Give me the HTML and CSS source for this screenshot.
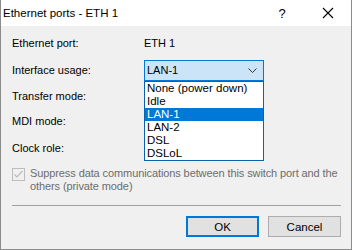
FILE: index.html
```html
<!DOCTYPE html>
<html lang="en">
<head>
    <meta charset="UTF-8">
    <title>Ethernet ports - ETH 1</title>
    <link rel="stylesheet" href="styles.css">
</head>
<body>
    <div class="window">
        <div class="titlebar">
            <span class="title">Ethernet ports - ETH 1</span>
            <span class="help">?</span>
            <span class="close">
                <svg width="12" height="12" viewBox="0 0 12 12"><path d="M1 1 L11 11 M11 1 L1 11" stroke="#000" stroke-width="1.1" fill="none"/></svg>
            </span>
        </div>

        <div class="content">
            <div class="form">
                <div class="row r1">
                    <span class="label">Ethernet port:</span>
                    <span class="value">ETH 1</span>
                </div>
                <div class="row r2">
                    <span class="label">Interface usage:</span>
                    <div class="combo">
                        <div class="combo-box">
                            <span>LAN-1</span>
                            <svg width="9" height="5" viewBox="0 0 9 5"><path d="M0.5 0.5 L4.5 4.5 L8.5 0.5" stroke="#333" stroke-width="1" fill="none"/></svg>
                        </div>
                        <ul class="combo-list">
                            <li>None (power down)</li>
                            <li>Idle</li>
                            <li class="selected">LAN-1</li>
                            <li>LAN-2</li>
                            <li>DSL</li>
                            <li>DSLoL</li>
                        </ul>
                    </div>
                </div>
                <div class="row r3">
                    <span class="label">Transfer mode:</span>
                </div>
                <div class="row r4">
                    <span class="label">MDI mode:</span>
                </div>
                <div class="row r5">
                    <span class="label">Clock role:</span>
                </div>
            </div>

            <label class="check">
                <span class="checkbox">
                    <svg width="11" height="11" viewBox="0 0 11 11"><path d="M1.5 5.5 L4 8 L9.5 2" stroke="#bcbcbc" stroke-width="1.2" fill="none"/></svg>
                </span>
                <span class="check-text">Suppress data communications between this switch port and the others (private mode)</span>
            </label>

            <div class="separator"></div>

            <div class="buttons">
                <button class="btn default">OK</button>
                <button class="btn">Cancel</button>
            </div>
        </div>
    </div>
</body>
</html>
```

FILE: styles.css
```css
body {
    margin: 0;
    font-family: "Liberation Sans", Arial, sans-serif;
    font-size: 11px;
    color: #000000;
    background-color: #ffffff;
}

.window {
    width: 350px;
    height: 249px;
    border: 1px solid #8c8c8c;
    border-top: none;
    display: flex;
    flex-direction: column;
}

/* Заголовок вікна */
.titlebar {
    height: 26px;
    background-color: #ffffff;
    display: flex;
    align-items: center;
    padding-left: 2px;
}

.title {
    flex: 1;
    font-size: 11.5px;
}

.help {
    width: 18px;
    text-align: center;
    font-size: 13px;
    margin-right: 31px;
}

.close {
    width: 12px;
    height: 12px;
    margin-right: 17px;
    display: flex;
}

/* Основна частина */
.content {
    flex: 1;
    background-color: #f0f0f0;
    padding: 4px 10px 0 11px;
    display: flex;
    flex-direction: column;
}

.row {
    display: flex;
    align-items: center;
}

.r1 { height: 26px; }
.r2 { height: 28px; }
.r3 { height: 24px; }
.r4 { height: 26px; }
.r5 { height: 28px; }

.label {
    width: 132px;
}

.combo {
    position: relative;
    width: 120px;
}

.combo-box {
    height: 19px;
    border: 1px solid #0078d7;
    background-color: #cce4f7;
    display: flex;
    align-items: center;
    justify-content: space-between;
    padding: 0 6px 0 2px;
}

.combo-list {
    position: absolute;
    top: 21px;
    left: 0;
    width: 118px;
    margin: 0;
    padding: 0;
    list-style: none;
    background-color: #ffffff;
    border: 1px solid #0a64ad;
    z-index: 10;
}

.combo-list li {
    height: 13px;
    line-height: 13px;
    padding-left: 2px;
    font-size: 11.5px;
}

.combo-list li.selected {
    background-color: #0078d7;
    color: #ffffff;
}

/* Чекбокс */
.check {
    display: flex;
    align-items: flex-start;
    margin-top: 5px;
    margin-right: -6px;
    color: #6d6d6d;
}

.checkbox {
    width: 11px;
    height: 11px;
    border: 1px solid #bcbcbc;
    background-color: #f0f0f0;
    margin-top: 1px;
    margin-right: 5px;
    display: flex;
}

.check-text {
    flex: 1;
    line-height: 13px;
    letter-spacing: -0.1px;
}

.separator {
    height: 1px;
    background-color: #a0a0a0;
    margin-top: 12px;
}

/* Кнопки */
.buttons {
    display: flex;
    justify-content: flex-end;
    gap: 9px;
    margin-top: 10px;
}

.btn {
    width: 73px;
    height: 21px;
    font-family: "Liberation Sans", Arial, sans-serif;
    font-size: 11.5px;
    background-color: #e1e1e1;
    border: 1px solid #adadad;
    color: #000000;
    padding: 0;
}

.btn.default {
    border: 2px solid #0078d7;
}
```
